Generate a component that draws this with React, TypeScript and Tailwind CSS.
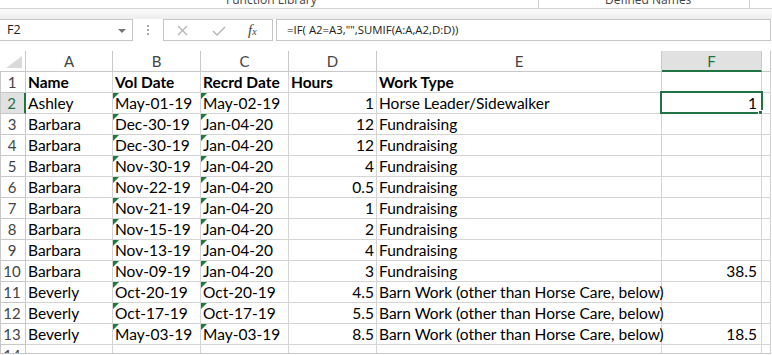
import React from "react";

type Row = { cells: string[]; bold?: boolean };

const rows: Row[] = [
  { cells: ["Name", "Vol Date", "Recrd Date", "Hours", "Work Type", ""], bold: true },
  { cells: ["Ashley", "May-01-19", "May-02-19", "1", "Horse Leader/Sidewalker", "1"] },
  { cells: ["Barbara", "Dec-30-19", "Jan-04-20", "12", "Fundraising", ""] },
  { cells: ["Barbara", "Dec-30-19", "Jan-04-20", "12", "Fundraising", ""] },
  { cells: ["Barbara", "Nov-30-19", "Jan-04-20", "4", "Fundraising", ""] },
  { cells: ["Barbara", "Nov-22-19", "Jan-04-20", "0.5", "Fundraising", ""] },
  { cells: ["Barbara", "Nov-21-19", "Jan-04-20", "1", "Fundraising", ""] },
  { cells: ["Barbara", "Nov-15-19", "Jan-04-20", "2", "Fundraising", ""] },
  { cells: ["Barbara", "Nov-13-19", "Jan-04-20", "4", "Fundraising", ""] },
  { cells: ["Barbara", "Nov-09-19", "Jan-04-20", "3", "Fundraising", "38.5"] },
  { cells: ["Beverly", "Oct-20-19", "Oct-20-19", "4.5", "Barn Work (other than Horse Care, below)", ""] },
  { cells: ["Beverly", "Oct-17-19", "Oct-17-19", "5.5", "Barn Work (other than Horse Care, below)", ""] },
  { cells: ["Beverly", "May-03-19", "May-03-19", "8.5", "Barn Work (other than Horse Care, below)", "18.5"] },
  { cells: ["", "", "", "", "", ""] },
];

const cols = ["A", "B", "C", "D", "E", "F"];
// numbers right aligned
const isNum = (s: string) => /^[0-9.]+$/.test(s);

const FormulaBar = () => (
  <div className="flex h-[22px] items-stretch font-['Open_Sans',sans-serif]">
    <div className="relative flex w-[133px] items-center border border-l-0 border-[#c6c6c6] bg-white pl-[7px] text-[12.5px] text-[#222]">
      F2
      <span className="absolute left-[118px] top-[9px] h-0 w-0 border-x-[4px] border-t-[4px] border-x-transparent border-t-[#777]" />
    </div>
    <div className="flex w-[30px] flex-col items-center justify-center gap-[2px]">
      <span className="h-[2px] w-[2px] bg-[#aaa]" />
      <span className="h-[2px] w-[2px] bg-[#aaa]" />
      <span className="h-[2px] w-[2px] bg-[#aaa]" />
    </div>
    <div className="relative w-[110px] border border-[#c6c6c6] bg-white">
      <svg className="absolute left-[13px] top-[5px]" width="11" height="11" viewBox="0 0 11 11">
        <path d="M1 1L10 10M10 1L1 10" stroke="#b4b4b4" strokeWidth="1.3" fill="none" />
      </svg>
      <svg className="absolute left-[48px] top-[6px]" width="14" height="10" viewBox="0 0 14 10">
        <path d="M1 5L5 9L13 1" stroke="#b4b4b4" strokeWidth="1.4" fill="none" />
      </svg>
      <span className="absolute left-[84px] top-[0px] font-['Liberation_Serif',serif] text-[15px] italic leading-[20px] text-[#444]">
        f<span className="text-[10px]">x</span>
      </span>
    </div>
    <div className="ml-[3px] flex w-[495px] items-center border border-[#c6c6c6] bg-white pl-[10px] text-[11.4px] text-[#222]">
      =IF( A2=A3,"",SUMIF(A:A,A2,D:D))
    </div>
  </div>
);

export default function App() {
  return (
    <div className="relative h-[355px] w-[772px] overflow-hidden bg-white font-['Lato',sans-serif]">
      {/* ribbon bottom, group labels cut off */}
      <div className="relative h-[9px] overflow-hidden border-b border-[#d4d4d4] font-['Open_Sans',sans-serif] text-[12px] text-[#444]">
        <span className="absolute left-[226px] top-[-8px] leading-[16px]">Function Library</span>
        <span className="absolute left-[538px] top-0 h-full w-px bg-[#d4d4d4]" />
        <span className="absolute left-[605px] top-[-8px] leading-[16px]">Defined Names</span>
        <span className="absolute left-[749px] top-0 h-full w-px bg-[#d4d4d4]" />
      </div>
      <div className="h-[10px] bg-gradient-to-b from-[#fbfbfb] to-[#ededed]" />
      <FormulaBar />

      <div className="relative mt-[10px] h-[303px] w-[771px] overflow-hidden border-b border-[#c6c6c6]">
        <div className="grid grid-cols-[26px_87px_88px_88px_88px_285px_100px_9px] text-[15.5px] leading-[20px] text-black">
          {/* header row */}
          <div className="relative h-[21px] border-b border-r border-[#c8c8c8]">
            <span className="absolute bottom-[3px] right-[3px] h-0 w-0 border-b-[12px] border-l-[16px] border-b-[#dadada] border-l-transparent" />
          </div>
          {cols.map((c) =>
            c === "F" ? (
              <div
                key={c}
                className="flex h-[21px] items-center justify-center border-b-2 border-r border-b-[#217346] border-r-[#c8c8c8] bg-[#e1e1e1] text-[15px] text-[#217346]"
              >
                {c}
              </div>
            ) : (
              <div key={c} className="flex h-[21px] items-center justify-center border-b border-r border-[#c8c8c8] text-[15px] text-[#444]">
                {c}
              </div>
            )
          )}
          <div className="h-[21px] border-b border-r border-[#c8c8c8]" />

          {rows.map((r, i) => {
            const n = i + 1;
            const sel = n === 2;
            return (
              <React.Fragment key={n}>
                <div
                  className={
                    sel
                      ? "flex h-[21px] items-end justify-center border-b border-l border-r-2 border-b-[#c8c8c8] border-l-[#c8c8c8] border-r-[#217346] bg-[#e1e1e1] pr-[2px] text-[15px] text-[#217346]"
                      : "flex h-[21px] items-end justify-center border-b border-l border-r border-[#c8c8c8] pr-[2px] text-[15px] text-[#444]"
                  }
                >
                  {n}
                </div>
                {r.cells.map((v, j) => (
                  <div
                    key={j}
                    className={`relative h-[21px] overflow-visible whitespace-nowrap border-b border-r border-[#d4d4d4] ${
                      isNum(v) ? (j === 5 ? "pr-[4px] text-right" : "pr-[2px] text-right") : "pl-[2px]"
                    } ${r.bold ? "font-bold" : ""}`}
                  >
                    {(j === 1 || j === 2) && n > 1 && n < 14 && (
                      <span className="absolute left-0 top-0 h-0 w-0 border-r-[6px] border-t-[6px] border-r-transparent border-t-[#1e7b3a]" />
                    )}
                    {v}
                  </div>
                ))}
                <div className="h-[21px] border-b border-r border-[#d4d4d4]" />
              </React.Fragment>
            );
          })}
        </div>

        {/* active cell F2 */}
        <div className="pointer-events-none absolute left-[660px] top-[40px] h-[23px] w-[103px] border-2 border-[#217346]" />
        <div className="pointer-events-none absolute left-[758px] top-[59px] h-[5px] w-[5px] border border-white bg-[#217346]" />
      </div>
    </div>
  );
}
